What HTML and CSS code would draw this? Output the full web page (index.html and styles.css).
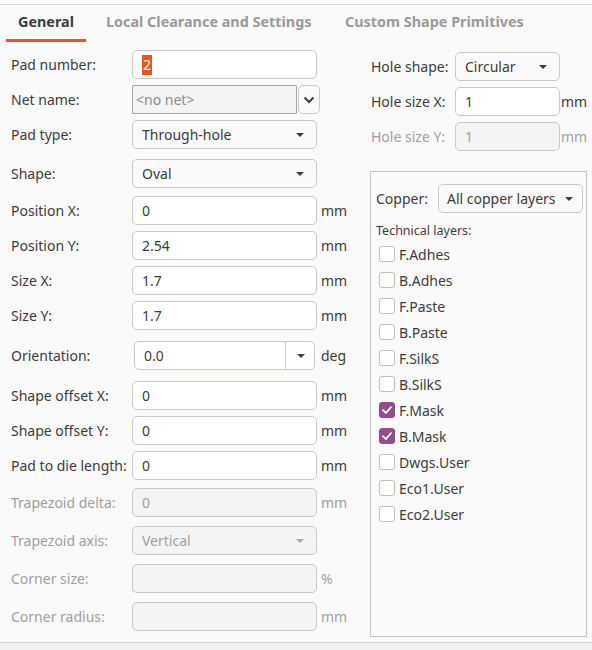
FILE: index.html
```html
<!DOCTYPE html>
<html>
<head>
<meta charset="utf-8">
<link rel="stylesheet" href="styles.css">
</head>
<body>
<div class="topline"></div>
<div class="tabs">
  <div class="tab tab-active">General</div>
  <div class="tab tab-2">Local Clearance and Settings</div>
  <div class="tab tab-3">Custom Shape Primitives</div>
</div>
<div class="main">
  <div class="col-left">
    <div class="row r-first"><span class="lbl">Pad number:</span><div class="field"><span class="sel">2</span></div></div>
    <div class="row g6"><span class="lbl">Net name:</span><div class="field net">&lt;no net&gt;</div><div class="netbtn"><svg width="12" height="8" viewBox="0 0 12 8"><path d="M1.5 1.5 L6 6 L10.5 1.5" fill="none" stroke="#3c3c3c" stroke-width="2"/></svg></div></div>
    <div class="row g6"><span class="lbl">Pad type:</span><div class="field combo">Through-hole<span class="arrow"></span></div></div>
    <div class="row g10"><span class="lbl">Shape:</span><div class="field combo">Oval<span class="arrow"></span></div></div>
    <div class="row g8"><span class="lbl">Position X:</span><div class="field">0</div><span class="unit">mm</span></div>
    <div class="row g6"><span class="lbl">Position Y:</span><div class="field">2.54</div><span class="unit">mm</span></div>
    <div class="row g6"><span class="lbl">Size X:</span><div class="field">1.7</div><span class="unit">mm</span></div>
    <div class="row g6"><span class="lbl">Size Y:</span><div class="field">1.7</div><span class="unit">mm</span></div>
    <div class="row g11"><span class="lbl">Orientation:</span><div class="field orient"><span class="orient-val">0.0</span><span class="orient-btn"><span class="arrow"></span></span></div><span class="unit">deg</span></div>
    <div class="row g11"><span class="lbl">Shape offset X:</span><div class="field">0</div><span class="unit">mm</span></div>
    <div class="row g6"><span class="lbl">Shape offset Y:</span><div class="field">0</div><span class="unit">mm</span></div>
    <div class="row g6"><span class="lbl">Pad to die length:</span><div class="field">0</div><span class="unit">mm</span></div>
    <div class="row g8 dis"><span class="lbl">Trapezoid delta:</span><div class="field">0</div><span class="unit">mm</span></div>
    <div class="row g9 dis"><span class="lbl">Trapezoid axis:</span><div class="field combo">Vertical<span class="arrow"></span></div></div>
    <div class="row g9 dis"><span class="lbl">Corner size:</span><div class="field"></div><span class="unit">%</span></div>
    <div class="row g9 dis"><span class="lbl">Corner radius:</span><div class="field"></div><span class="unit">mm</span></div>
  </div>
  <div class="col-right">
    <div class="rrow rr-first"><span class="rlbl">Hole shape:</span><div class="rfield combo">Circular<span class="arrow"></span></div></div>
    <div class="rrow rg6"><span class="rlbl">Hole size X:</span><div class="rfield">1</div><span class="runit">mm</span></div>
    <div class="rrow rg6 dis"><span class="rlbl">Hole size Y:</span><div class="rfield">1</div><span class="runit">mm</span></div>
    <div class="layerbox">
      <div class="copper"><span class="clbl">Copper:</span><div class="cfield combo">All copper layers<span class="arrow"></span></div></div>
      <div class="tech">Technical layers:</div>
      <ul class="checks">
        <li><span class="cb"></span>F.Adhes</li>
        <li><span class="cb"></span>B.Adhes</li>
        <li><span class="cb"></span>F.Paste</li>
        <li><span class="cb"></span>B.Paste</li>
        <li><span class="cb"></span>F.SilkS</li>
        <li><span class="cb"></span>B.SilkS</li>
        <li><span class="cb on"><svg width="16" height="16" viewBox="0 0 16 16"><path d="M4 8.2 L7 11 L12 5.2" fill="none" stroke="#fff" stroke-width="1.8" stroke-linecap="round" stroke-linejoin="round"/></svg></span>F.Mask</li>
        <li><span class="cb on"><svg width="16" height="16" viewBox="0 0 16 16"><path d="M4 8.2 L7 11 L12 5.2" fill="none" stroke="#fff" stroke-width="1.8" stroke-linecap="round" stroke-linejoin="round"/></svg></span>B.Mask</li>
        <li><span class="cb"></span>Dwgs.User</li>
        <li><span class="cb"></span>Eco1.User</li>
        <li><span class="cb"></span>Eco2.User</li>
      </ul>
    </div>
  </div>
</div>
<div class="footer"></div>
</body>
</html>
```

FILE: styles.css
```css
html, body {
  margin: 0;
  padding: 0;
}
body {
  width: 592px;
  height: 650px;
  overflow: hidden;
  background: #fafafa;
  color: #3c3c3c;
  font-family: "Noto Sans", "DejaVu Sans", sans-serif;
  font-size: 14px;
}
.topline {
  height: 4px;
  border-bottom: 1px solid #d6d6d6;
}
.tabs {
  display: flex;
  height: 37px;
}
.tab {
  box-sizing: border-box;
  font-weight: bold;
  font-size: 14.4px;
  color: #9a9a9a;
  line-height: 34px;
  white-space: nowrap;
}
.tab-active {
  margin-left: 6px;
  width: 80px;
  text-align: center;
  color: #3c3c3c;
  border-bottom: 3px solid #e95420;
}
.tab-2 {
  padding-left: 20px;
  width: 259px;
}
.tab-3 {
  padding-left: 0;
}
.main {
  display: flex;
  height: 600px;
}
.col-left {
  width: 360px;
  padding-left: 11px;
  box-sizing: border-box;
}
.row {
  display: flex;
  align-items: center;
  height: 29px;
}
.r-first { margin-top: 8px; }
.g6 { margin-top: 6px; }
.g8 { margin-top: 8px; }
.g9 { margin-top: 9px; }
.g10 { margin-top: 10px; }
.g11 { margin-top: 11px; }
.lbl {
  width: 121px;
  white-space: nowrap;
}
.field {
  box-sizing: border-box;
  width: 185px;
  height: 29px;
  border: 1px solid #cdc7c2;
  border-radius: 5px;
  background: #fff;
  display: flex;
  align-items: center;
  padding-left: 9px;
  position: relative;
}
.sel {
  background: #e95420;
  color: #fff;
  padding: 0 1px;
  line-height: 20px;
}
.field.net {
  width: 165px;
  border-radius: 1px;
  border-color: #a6a6a6;
  background: #f4f4f4;
  color: #8c8c8c;
  font-size: 14px;
  padding-left: 3px;
}
.netbtn {
  box-sizing: border-box;
  width: 22px;
  height: 29px;
  margin-left: 1px;
  border: 1px solid #cdc7c2;
  border-radius: 5px;
  display: flex;
  align-items: center;
  justify-content: center;
  background: #fafafa;
}
.combo {
  background: #fafafa;
}
.arrow {
  position: absolute;
  right: 12px;
  top: 12px;
  width: 0;
  height: 0;
  border-left: 4px solid transparent;
  border-right: 4px solid transparent;
  border-top: 4px solid #3c3c3c;
}
.field.orient {
  width: 181px;
  margin-left: 2px;
  margin-right: 2px;
  padding-left: 0;
}
.orient-val {
  flex: 1;
  padding-left: 9px;
}
.orient-btn {
  position: relative;
  width: 29px;
  height: 27px;
  border-left: 1px solid #cdc7c2;
  box-sizing: border-box;
}
.orient-btn .arrow {
  right: 9px;
}
.unit {
  margin-left: 4px;
}
.dis {
  color: #9f9f9f;
}
.dis .field {
  background: #f4f4f4;
  color: #9f9f9f;
}
.dis .arrow {
  border-top-color: #a8a8a8;
}

.col-right {
  width: 232px;
  padding-left: 11px;
  box-sizing: border-box;
}
.rrow {
  display: flex;
  align-items: center;
  height: 29px;
}
.rr-first { margin-top: 10px; }
.rg6 { margin-top: 6px; }
.rlbl {
  width: 84px;
  white-space: nowrap;
}
.rfield {
  box-sizing: border-box;
  width: 105px;
  height: 29px;
  border: 1px solid #cdc7c2;
  border-radius: 5px;
  background: #fff;
  display: flex;
  align-items: center;
  padding-left: 9px;
  position: relative;
}
.rfield.combo {
  background: #fafafa;
}
.runit {
  margin-left: 1px;
}
.dis .rfield {
  background: #f4f4f4;
  color: #9f9f9f;
}
.layerbox {
  box-sizing: border-box;
  margin-top: 20px;
  margin-left: -1px;
  width: 217px;
  height: 466px;
  border: 1px solid #c4c4c4;
  padding: 12px 0 0 5px;
}
.copper {
  display: flex;
  align-items: center;
  height: 29px;
}
.clbl {
  width: 62px;
  white-space: nowrap;
}
.cfield {
  box-sizing: border-box;
  width: 145px;
  height: 29px;
  border: 1px solid #cdc7c2;
  border-radius: 5px;
  display: flex;
  align-items: center;
  padding-left: 8px;
  position: relative;
  white-space: nowrap;
}
.cfield .arrow {
  right: 9px;
}
.tech {
  font-size: 12.5px;
  margin-top: 9px;
  line-height: 18px;
}
.checks {
  list-style: none;
  margin: 1px 0 0 3px;
  padding: 0;
}
.checks li {
  display: flex;
  align-items: center;
  height: 26px;
  white-space: nowrap;
}
.cb {
  box-sizing: border-box;
  width: 16px;
  height: 16px;
  border: 1px solid #c6c0bb;
  border-radius: 3px;
  background: #fff;
  margin-right: 4px;
  display: flex;
}
.cb.on {
  background: #924d8b;
  border-color: #924d8b;
}
.cb.on svg {
  margin: -1px;
}
.footer {
  border-top: 1px solid #d0d0d0;
  background: #f2f2f2;
  height: 8px;
}
```
